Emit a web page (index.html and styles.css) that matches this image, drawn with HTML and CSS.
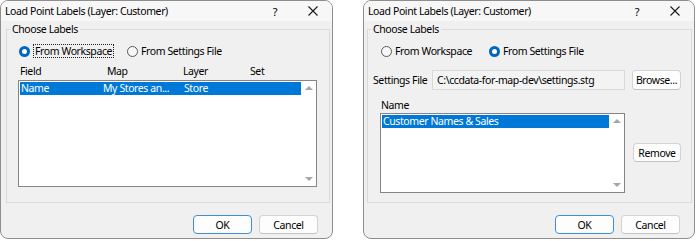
FILE: index.html
```html
<!DOCTYPE html>
<html lang="en">
<head>
  <meta charset="UTF-8">
  <title>Load Point Labels</title>
  <link rel="stylesheet" href="styles.css">
</head>
<body>
  <div class="screen">
    <div class="dialog dlg-left">
      <div class="titlebar">
        <span class="title">Load Point Labels (Layer: Customer)</span>
        <span class="cap">?</span>
        <span class="cap"><svg width="10" height="10" viewBox="0 0 10 10"><path d="M0.5 0.5L9.5 9.5M9.5 0.5L0.5 9.5" stroke="#1a1a1a" stroke-width="1.1" fill="none"/></svg></span>
      </div>
      <fieldset class="group">
        <legend>Choose Labels</legend>
        <div class="radios">
          <label class="radio first on"><span class="dot"></span><span class="focus">From Workspace</span></label>
          <label class="radio"><span class="dot"></span>From Settings File</label>
        </div>
        <div class="cols">
          <span class="c-field">Field</span><span class="c-map">Map</span><span class="c-layer">Layer</span><span class="c-set">Set</span>
        </div>
        <div class="list list-fields">
          <div class="rows">
            <div class="row sel"><span class="c-field">Name</span><span class="c-map2">My Stores an...</span><span class="c-layer">Store</span></div>
          </div>
          <div class="scroll"><span class="up"></span><span class="down"></span></div>
        </div>
      </fieldset>
      <div class="footer">
        <button class="btn default">OK</button>
        <button class="btn">Cancel</button>
      </div>
    </div>

    <div class="dialog dlg-right">
      <div class="titlebar">
        <span class="title">Load Point Labels (Layer: Customer)</span>
        <span class="cap">?</span>
        <span class="cap"><svg width="10" height="10" viewBox="0 0 10 10"><path d="M0.5 0.5L9.5 9.5M9.5 0.5L0.5 9.5" stroke="#1a1a1a" stroke-width="1.1" fill="none"/></svg></span>
      </div>
      <fieldset class="group">
        <legend>Choose Labels</legend>
        <div class="radios indent">
          <label class="radio first"><span class="dot"></span>From Workspace</label>
          <label class="radio on"><span class="dot"></span>From Settings File</label>
        </div>
        <div class="file-row">
          <span class="file-label">Settings File</span>
          <span class="textbox">C:\ccdata-for-map-dev\settings.stg</span>
          <button class="btn browse">Browse...</button>
        </div>
        <div class="name-label">Name</div>
        <div class="name-row">
          <div class="list list-names">
            <div class="rows">
              <div class="row sel"><span>Customer Names &amp; Sales</span></div>
            </div>
            <div class="scroll"><span class="up"></span><span class="down"></span></div>
          </div>
          <button class="btn remove">Remove</button>
        </div>
      </fieldset>
      <div class="footer">
        <button class="btn default">OK</button>
        <button class="btn">Cancel</button>
      </div>
    </div>
  </div>
</body>
</html>
```

FILE: styles.css
```css
body { margin: 0; background: #fff; font-family: "Noto Sans", sans-serif; font-size: 10.5px; letter-spacing: -0.4px; color: #000; }
.screen { display: flex; gap: 30px; height: 241px; }
.dialog { box-sizing: border-box; height: 239px; border: 1px solid #8e8e8e; border-radius: 8px; background: #f0f0f0; display: flex; flex-direction: column; overflow: hidden; }
.dlg-left { width: 333px; }
.dlg-right { width: 332px; }

.titlebar { height: 20px; flex: none; display: flex; align-items: center; padding-left: 4px; background: #f7f7f7; }
.title { flex: 1; white-space: nowrap; }
.cap { width: 38px; display: flex; justify-content: center; align-items: center; font-size: 11px; }

.group { box-sizing: border-box; height: 181px; margin: 1px 2px 0 5px; padding: 0; border: 1px solid #dadada; min-width: 0; flex: none; }
.dlg-right .group { margin-left: 3px; }
.group legend { margin-left: 3px; padding: 0 2px; line-height: 14px; }

.radios { display: flex; align-items: center; height: 16px; margin: 7px 0 0 12px; }
.radios.indent { margin-left: 13px; }
.radio { display: flex; align-items: center; gap: 2px; white-space: nowrap; }
.radio.first { width: 108px; }
.dot { box-sizing: border-box; width: 11px; height: 11px; border-radius: 50%; border: 1px solid #5a5a5a; background: #f7f7f7; position: relative; margin-right: 1px; }
.radio.on .dot { border: none; background: #0067c0; }
.radio.on .dot::after { content: ""; position: absolute; left: 3px; top: 3px; width: 5px; height: 5px; border-radius: 50%; background: #fff; }
.focus { border: 1px dotted #222; padding: 0 1px; line-height: 12px; }

.cols { display: flex; height: 14px; line-height: 14px; margin: 5px 0 0 13px; }
.c-field { width: 87px; }
.c-map { width: 76px; }
.c-map2 { width: 81px; }
.c-layer { width: 67px; }

.list { box-sizing: border-box; display: flex; border: 1px solid #858585; background: #fff; }
.list-fields { width: 299px; height: 107px; margin: 2px 0 0 11px; }
.rows { flex: 1; padding: 1px 0 0 1px; }
.row { display: flex; height: 13px; line-height: 13px; padding-left: 1px; white-space: nowrap; }
.row.sel { background: #0078d7; color: #fff; }
.list-fields .row.sel .c-map2 { margin-left: -5px; }
.scroll { width: 15px; display: flex; flex-direction: column; justify-content: space-between; align-items: center; padding: 5px 0 5px; }
.up { width: 0; height: 0; border-left: 4px solid transparent; border-right: 4px solid transparent; border-bottom: 4px solid #a6a6a6; }
.down { width: 0; height: 0; border-left: 4px solid transparent; border-right: 4px solid transparent; border-top: 4px solid #a6a6a6; }

.file-row { display: flex; align-items: center; height: 20px; margin: 11px 0 0 5px; }
.file-label { width: 59px; white-space: nowrap; }
.textbox { box-sizing: border-box; width: 193px; height: 20px; line-height: 18px; padding-left: 4px; border: 1px solid #d9d9d9; background: #f3f3f3; white-space: nowrap; }
.name-label { height: 14px; line-height: 14px; margin: 8px 0 0 13px; }
.name-row { display: flex; margin: 1px 0 0 12px; }
.list-names { width: 245px; height: 80px; }

.btn { box-sizing: border-box; height: 19px; padding: 0; font: inherit; letter-spacing: inherit; color: #000; background: #fdfdfd; border: 1px solid #d3d3d3; border-bottom-color: #c2c2c2; border-radius: 4px; }
.btn.default { border-color: #3f8fd0; }
.browse { width: 49px; height: 20px; margin-left: 7px; }
.remove { width: 48px; margin: 30px 0 0 8px; }

.footer { display: flex; justify-content: flex-end; gap: 7px; padding-right: 14px; margin-top: 12px; }
.footer .btn { width: 59px; }
```
